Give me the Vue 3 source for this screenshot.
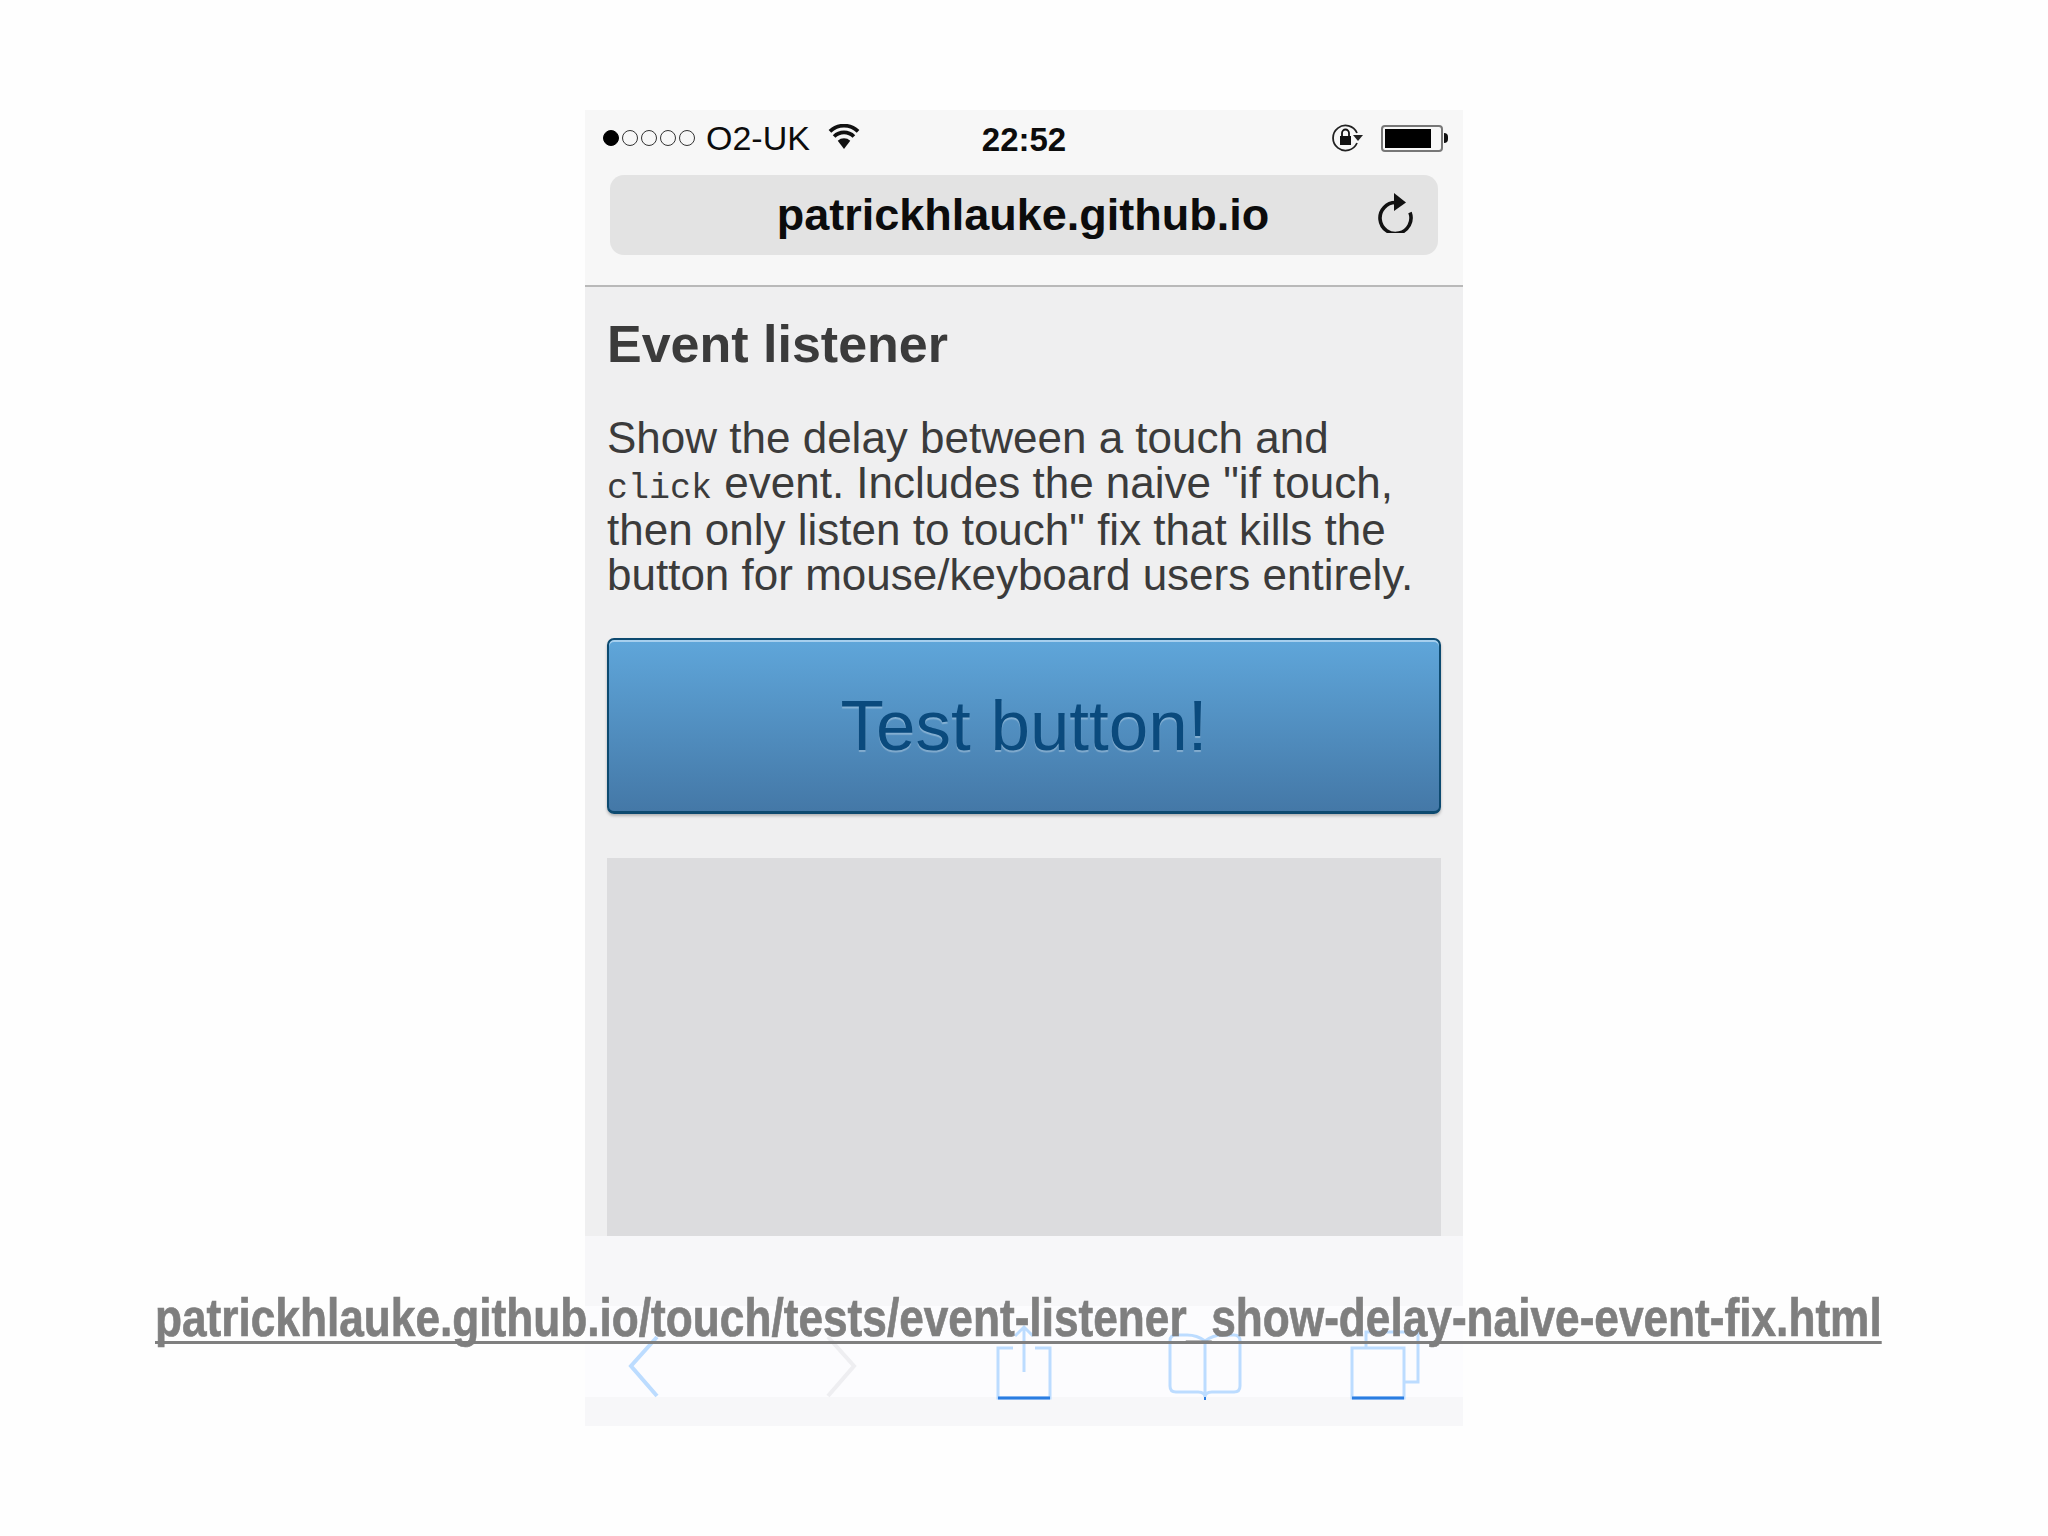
<script setup>
const dots = [true, false, false, false, false]
</script>

<template>
  <div class="slide">
    <section class="phone">
      <header class="chrome">
        <div class="status">
          <div class="status-left">
            <span class="signal">
              <i v-for="(on, n) in dots" :key="n" class="dot" :class="{ on }"></i>
            </span>
            <span class="carrier">O2-UK</span>
            <svg class="wifi" viewBox="0 0 34 24" width="36" height="25">
              <path d="M17 24l-6-8a9 9 0 0 1 12 0z" fill="#111"/>
              <path d="M7.500 12a13.500 13.500 0 0 1 19 0M3.500 7a19.500 19.500 0 0 1 27 0" fill="none" stroke="#111" stroke-width="3.600"/>
            </svg>
          </div>
          <span class="time">22:52</span>
          <div class="status-right">
            <svg class="lock" viewBox="0 0 34 30" width="34" height="30">
              <path d="M26 20a12.500 12.500 0 1 1 0-10" fill="none" stroke="#222" stroke-width="1.800"/>
              <path d="M22 12h10l-5 6z" fill="#222"/>
              <rect x="9" y="13" width="11" height="9" fill="#111"/>
              <path d="M11 13v-3a3.500 3.500 0 0 1 7 0v3" fill="none" stroke="#111" stroke-width="1.800"/>
            </svg>
            <span class="battery"><span class="charge"></span></span>
            <span class="nub"></span>
          </div>
        </div>
        <div class="url-bar">
          <span class="url">patrickhlauke.github.io</span>
          <svg class="reload" viewBox="0 0 36 40" width="36" height="40">
            <path d="M19 9.500a15.500 15.500 0 1 0 14 10" fill="none" stroke="#111" stroke-width="3.600"/>
            <path d="M17 0l12 9.500-12 8.500z" fill="#111"/>
          </svg>
        </div>
      </header>

      <main class="page">
        <h1 class="title">Event listener</h1>
        <p class="copy">
          Show the delay between a touch and<br>
          <code>click</code> event. Includes the naive "if touch,<br>
          then only listen to touch" fix that kills the<br>
          button for mouse/keyboard users entirely.
        </p>
        <button class="test" type="button">Test button!</button>
        <div class="log"></div>
      </main>

      <footer class="toolbar">
        <div class="tools">
          <svg class="tools-art" viewBox="0 0 878 100" width="878" height="100">
            <g fill="none" stroke="#bcdcff" stroke-width="3">
              <path d="M72 8 46 37l26 30" stroke-width="4"/>
              <path d="M243 8l26 29-26 30" stroke="#eeeef1" stroke-width="4"/>
              <path d="M428 19h-15v50h52V19h-15"/>
              <path d="M439 43V-2M430 7l9-9 9 9"/>
              <path d="M620 12q-8-6-18-6h-11q-6 0-6 6v45q0 6 6 6h22q7 0 7 5 0-5 7-5h22q6 0 6-6V12q0-6-6-6h-11q-10 0-18 6zm0 0v54"/>
              <path d="M767 19h52v50h-52zM781 19V3h52v50h-14"/>
            </g>
            <path d="M413 69h52M767 69h52" stroke="#2a7de1" stroke-width="3" fill="none"/>
            <rect x="619" y="68" width="2" height="3" fill="#2a7de1"/>
          </svg>
        </div>
      </footer>
    </section>

    <a class="caption" href="#">patrickhlauke.github.io/touch/tests/event-listener_show-delay-naive-event-fix.html</a>
  </div>
</template>

<style scoped>
.slide {
  position: relative;
  width: 2048px;
  height: 1536px;
  padding: 110px 0 0 585px;
  box-sizing: border-box;
  background: #fefefe;
  overflow: hidden;
  font-family: "Liberation Sans", Arial, sans-serif;
}
.phone {
  display: flex;
  flex-direction: column;
  width: 878px;
  height: 1316px;
}
.chrome {
  height: 177px;
  box-sizing: border-box;
  background: #f7f7f7;
  border-bottom: 2px solid #b9b9b9;
  padding: 0 25px;
  color: #0c0c0c;
}
.status {
  display: flex;
  align-items: center;
  justify-content: space-between;
  height: 56px;
  margin: 0 -10px 9px -7px;
  box-sizing: border-box;
}
.status-left,
.status-right {
  display: flex;
  align-items: center;
  width: 300px;
}
.status-right {
  justify-content: flex-end;
}
.signal {
  display: flex;
  gap: 3px;
}
.dot {
  width: 16px;
  height: 16px;
  border: 1.500px solid #333;
  border-radius: 50%;
  box-sizing: border-box;
}
.dot.on {
  background: #000;
  border-color: #000;
}
.carrier {
  margin-left: 11px;
  font-size: 34px;
  line-height: 1;
}
.wifi {
  margin-left: 16px;
  margin-top: -4px;
}
.time {
  margin: 2px 3px 0 0;
  font-size: 33px;
  font-weight: 700;
  line-height: 1;
}
.lock {
  margin-right: 16px;
}
.battery {
  display: block;
  width: 62px;
  height: 27px;
  box-sizing: border-box;
  border: 2px solid #777;
  border-radius: 4px;
  padding: 2px;
}
.charge {
  display: block;
  width: 46px;
  height: 19px;
  background: #000;
}
.nub {
  width: 4px;
  height: 10px;
  margin-left: 1px;
  background: #111;
  border-radius: 0 4px 4px 0;
}
.url-bar {
  position: relative;
  display: flex;
  align-items: center;
  justify-content: center;
  height: 80px;
  border-radius: 14px;
  background: #e3e3e3;
}
.url {
  margin: -2px 2px 0 0;
  font-size: 45px;
  font-weight: 700;
  line-height: 1;
}
.reload {
  position: absolute;
  right: 25px;
  top: 18px;
}
.page {
  flex: 1;
  min-height: 0;
  padding: 27px 22px 0;
  background: #efeff0;
  color: #3b3b3b;
}
.title {
  margin: 0;
  font-size: 52px;
  line-height: 60px;
  font-weight: 700;
}
.copy {
  margin: 41px 0 0;
  font-size: 44px;
  line-height: 45px;
  white-space: nowrap;
}
code {
  font-family: "Liberation Mono", monospace;
  font-size: 35px;
  line-height: 1;
}
.test {
  display: block;
  width: 834px;
  height: 176px;
  margin: 41px 0 0;
  padding: 0;
  border: 2px solid #0d4a70;
  border-bottom-width: 3px;
  border-radius: 7px;
  background: linear-gradient(#5fa6da, #4478a7);
  box-shadow: inset 0 2px 0 #a6cfee, 0 2px 3px rgba(0, 0, 0, 0.25);
  color: #0a4a7d;
  font-family: inherit;
  font-size: 71px;
  text-shadow: 0 2px 1px rgba(255, 255, 255, 0.3);
}
.log {
  width: 834px;
  height: 380px;
  margin-top: 44px;
  background: #dcdcde;
}
.toolbar {
  height: 190px;
  padding-top: 70px;
  box-sizing: border-box;
  background: #f7f7f9;
}
.tools {
  height: 91px;
  padding-top: 23px;
  box-sizing: border-box;
  background: #fcfcfe;
}
.tools-art {
  display: block;
  overflow: visible;
}
.caption {
  position: absolute;
  left: 155px;
  top: 1290px;
  color: #7f7f7f;
  -webkit-text-stroke: 0.7px #7f7f7f;
  font-family: "Liberation Sans", sans-serif;
  font-size: 53px;
  font-weight: 700;
  line-height: 56px;
  text-decoration-thickness: 3px;
  text-decoration-skip-ink: none;
  text-underline-offset: 5px;
  white-space: nowrap;
  transform: scaleX(0.834);
  transform-origin: left center;
}
</style>
